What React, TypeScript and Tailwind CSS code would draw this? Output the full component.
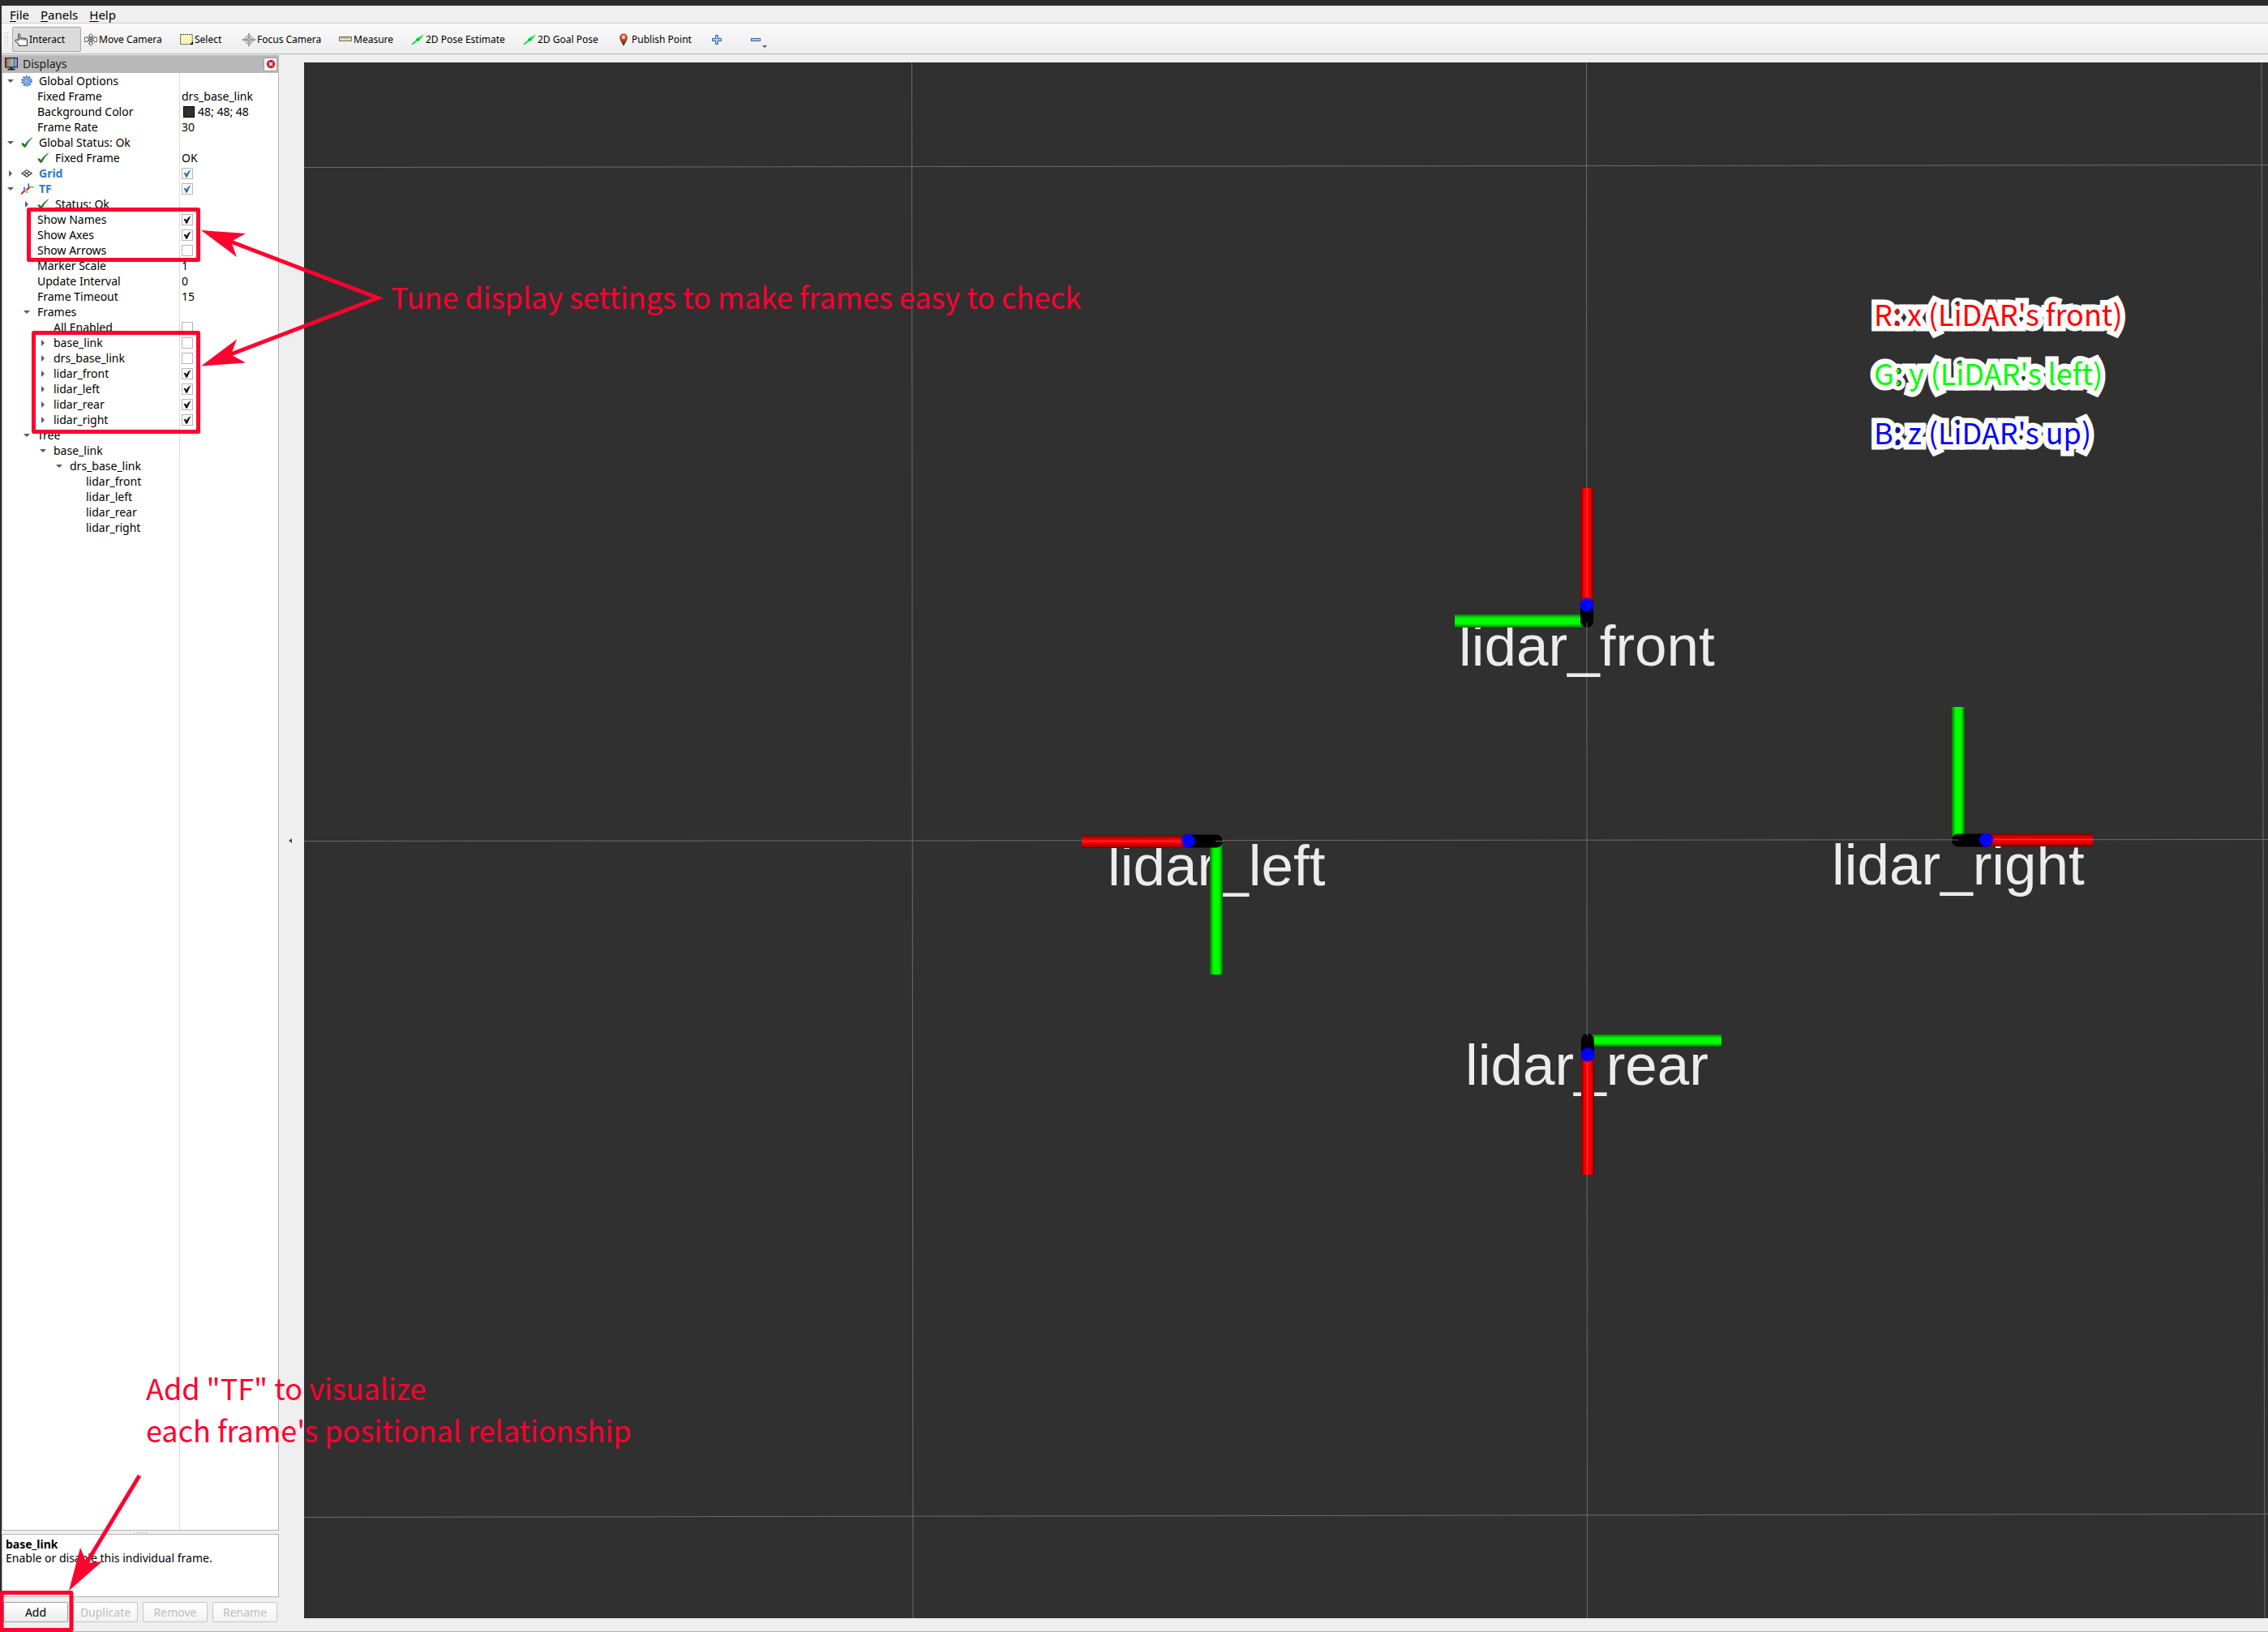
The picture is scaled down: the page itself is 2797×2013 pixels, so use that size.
import React, { useState } from "react";

type Check = "on" | "off";
type Row = {
  name: string;
  level: number;
  arrow?: "down" | "right";
  icon?: "gear" | "ok" | "grid" | "tf";
  value?: string;
  swatch?: boolean;
  check?: Check;
  display?: boolean;
};

const rows: Row[] = [
  { name: "Global Options", level: 0, arrow: "down", icon: "gear" },
  { name: "Fixed Frame", level: 1, value: "drs_base_link" },
  { name: "Background Color", level: 1, value: "48; 48; 48", swatch: true },
  { name: "Frame Rate", level: 1, value: "30" },
  { name: "Global Status: Ok", level: 0, arrow: "down", icon: "ok" },
  { name: "Fixed Frame", level: 1, icon: "ok", value: "OK" },
  { name: "Grid", level: 0, arrow: "right", icon: "grid", check: "on", display: true },
  { name: "TF", level: 0, arrow: "down", icon: "tf", check: "on", display: true },
  { name: "Status: Ok", level: 1, arrow: "right", icon: "ok" },
  { name: "Show Names", level: 1, check: "on" },
  { name: "Show Axes", level: 1, check: "on" },
  { name: "Show Arrows", level: 1, check: "off" },
  { name: "Marker Scale", level: 1, value: "1" },
  { name: "Update Interval", level: 1, value: "0" },
  { name: "Frame Timeout", level: 1, value: "15" },
  { name: "Frames", level: 1, arrow: "down" },
  { name: "All Enabled", level: 2, check: "off" },
  { name: "base_link", level: 2, arrow: "right", check: "off" },
  { name: "drs_base_link", level: 2, arrow: "right", check: "off" },
  { name: "lidar_front", level: 2, arrow: "right", check: "on" },
  { name: "lidar_left", level: 2, arrow: "right", check: "on" },
  { name: "lidar_rear", level: 2, arrow: "right", check: "on" },
  { name: "lidar_right", level: 2, arrow: "right", check: "on" },
  { name: "Tree", level: 1, arrow: "down" },
  { name: "base_link", level: 2, arrow: "down" },
  { name: "drs_base_link", level: 3, arrow: "down" },
  { name: "lidar_front", level: 4 },
  { name: "lidar_left", level: 4 },
  { name: "lidar_rear", level: 4 },
  { name: "lidar_right", level: 4 },
];

const indent = ["pl-0", "pl-5", "pl-10", "pl-15", "pl-20"];

function GearIcon() {
  return (
    <svg viewBox="0 0 14 14" className="size-3.5">
      <circle cx="7" cy="7" r="5.8" fill="none" stroke="#3f71b5" strokeWidth="2" strokeDasharray="2.2 1.44" />
      <circle cx="7" cy="7" r="4.8" fill="#86aee0" stroke="#4b7cc0" strokeWidth=".7" />
      <circle cx="7" cy="7" r="2.6" fill="#a9c8ef" stroke="#3f71b5" strokeWidth=".9" strokeDasharray="1.2 .6" />
      <circle cx="7" cy="7" r="1" fill="#fff" stroke="#3465a4" strokeWidth=".6" />
    </svg>
  );
}

function OkIcon() {
  return (
    <svg viewBox="0 0 14 14" className="size-3.5">
      <path d="M.6 8.4 2.2 7.2 4.6 9.6 Q7.5 4.6 13.4.8 L13.6 1.1 Q8.6 5.8 5.4 12.6 L4 12.8 Z" fill="#1e7b1e" stroke="#125c12" strokeWidth=".4" />
    </svg>
  );
}

function GridIcon() {
  return (
    <svg viewBox="0 0 14 14" className="size-3.5" fill="none" stroke="#333" strokeWidth="1.1">
      <path d="M7 2.6 13.2 6.8 7 11 .8 6.8Z M3.9 4.7 10.1 8.9 M10.1 4.7 3.9 8.9" />
    </svg>
  );
}

function TfIcon() {
  return (
    <svg viewBox="0 0 16 14" className="h-3.5 w-4 shrink-0" fill="none" strokeWidth="1.3">
      <path d="M0 13.4 4 9.6" stroke="#f00" strokeWidth="1.8" />
      <path d="M4 10V4.5" stroke="#22f" />
      <path d="M4 10l4.6 1.4" stroke="#0d0" />
      <path d="M4.5 9.6 9 5.6" stroke="#f0a030" />
      <path d="M6.8 8.6 10.4 5" stroke="#f00" strokeWidth="1.8" />
      <path d="M10 5 8.8.3" stroke="#22f" />
      <path d="M10 4.9h6" stroke="#0d0" />
    </svg>
  );
}

function RowIcon({ kind }: { kind: NonNullable<Row["icon"]> }) {
  return (
    <span className="mr-2 flex w-3.5 shrink-0 items-center">
      {kind === "gear" && <GearIcon />}
      {kind === "ok" && <OkIcon />}
      {kind === "grid" && <GridIcon />}
      {kind === "tf" && <TfIcon />}
    </span>
  );
}

function CheckBox({ label, initial, blue }: { label: string; initial: Check; blue?: boolean }) {
  const [on, setOn] = useState(initial === "on");
  return (
    <span className="relative flex size-3.5">
      <input
        type="checkbox"
        aria-label={label}
        checked={on}
        onChange={(e) => setOn(e.target.checked)}
        className="size-3.5 appearance-none border border-[#b4b4b4] bg-white"
      />
      {on && (
        <svg viewBox="0 0 14 14" className={blue ? "pointer-events-none absolute inset-0 text-[#2367a8]" : "pointer-events-none absolute inset-0 text-black"}>
          <path d="M2.700 6.300 4.700 5.900 6 8.200 Q7.600 4.200 11.200 2.500 Q8.900 6.600 6.800 11.400 H5.300 Q4.400 8.700 2.700 6.300Z" fill="currentColor" stroke="currentColor" strokeWidth=".3" />
        </svg>
      )}
    </span>
  );
}

function TreeArrow({ dir }: { dir?: "down" | "right" }) {
  return (
    <span className="flex w-5 shrink-0 items-center justify-center">
      {dir && (
        <svg viewBox="0 0 8 8" className="size-2" fill="#5c5c5c">
          {dir === "down" ? <path d="M0 2h8L4 6z" /> : <path d="M2 0v8l4-4z" />}
        </svg>
      )}
    </span>
  );
}

function PropertyTree() {
  return (
    <div className="flex flex-1 flex-col border border-t-0 border-[#b4b4b4] bg-white">
      <div role="tree" aria-label="Displays">
        {rows.map((r, i) => (
          <div key={i} role="treeitem" aria-level={r.level + 1} className="flex h-[19px] leading-[19px]">
            <div className="flex w-[219px] shrink-0 items-center border-r border-[#dadada]">
              <div className={`flex items-center ${indent[r.level]}`}>
                <TreeArrow dir={r.arrow} />
                <span className="w-[3px] shrink-0" />
                {r.icon && <RowIcon kind={r.icon} />}
                <span className={r.display ? "font-bold text-[#2d7cc7]" : ""}>{r.name}</span>
              </div>
            </div>
            <div className="flex flex-1 items-center pl-0.5">
              {r.swatch && <span className="mr-1 ml-0.5 size-3.5 border border-black bg-[#303030]" />}
              {r.value}
              {r.check && <CheckBox label={r.name} initial={r.check} blue={r.display} />}
            </div>
          </div>
        ))}
      </div>
      <div className="w-[219px] flex-1 border-r border-[#dadada]" />
    </div>
  );
}

function HandIcon() {
  return (
    <svg viewBox="0 0 16 16" className="size-4" fill="#fff" stroke="#222" strokeWidth="1" strokeLinejoin="round">
      <path d="M4.5 9V1.8Q4.5.6 5.5.6T6.6 1.8V6Q7.5 5 8.6 6.2 9.8 5.3 10.9 6.4 12 5.6 13 6.7 15.2 6.2 15.4 8V15.3H5V13.2L.7 9.6Q.5 8 2 8Z" />
      <path d="M6.6 6v2.4M8.7 6.3v2M10.9 6.5v2M13 6.8v2" />
    </svg>
  );
}

function MoveIcon() {
  return (
    <svg viewBox="0 0 16 16" className="size-4" fill="#fff" stroke="#444" strokeWidth=".9" strokeLinejoin="round">
      <path d="M8 .6 10.8 3.6H9.2V6Q11 5.600 12.600 6V4.600L15.600 5.200V10.400L12.600 10.600 11.800 8.800 9.400 9.600V12.400H10.800L8 15.400 5.200 12.400H6.600V9.600L4.200 8.800 3.400 10.600.4 10.400V5.200L3.400 4.600V6Q5 5.600 6.800 6V3.600H5.200Z" />
      <circle cx="8" cy="7.800" r="2.600" />
      <path d="M5.400 7.800h5.200M8 5.200v5.200" />
    </svg>
  );
}

function SelectIcon() {
  return (
    <svg viewBox="0 0 16 16" className="size-4">
      <rect x=".6" y="1.600" width="14.600" height="12" fill="#fbf5b8" stroke="#222" strokeWidth="1" strokeDasharray="1.600 1" />
      <path d="M16 10v4h-4z" fill="#000" />
    </svg>
  );
}

function FocusIcon() {
  return (
    <svg viewBox="0 0 16 16" className="size-4" fill="none" stroke="#666" strokeWidth="1">
      <circle cx="8" cy="8" r="5" fill="#fff" />
      <circle cx="8" cy="8" r="2.600" />
      <path d="M8 0v16M0 8h16" strokeWidth="1.800" stroke="#777" />
      <path d="M8 1v14M1 8h14" strokeWidth=".7" stroke="#eee" />
    </svg>
  );
}

function RulerIcon() {
  return (
    <svg viewBox="0 0 16 16" className="size-4">
      <rect x=".5" y="4.500" width="15" height="5" fill="#f1e4a8" stroke="#6a6a6a" />
      <path d="M3 5v2M5 5v2M7 5v2M9 5v2M11 5v2M13 5v2" stroke="#777" strokeWidth=".8" />
    </svg>
  );
}

function PoseIcon() {
  return (
    <svg viewBox="0 0 16 16" className="size-4">
      <path d="M.3 13.200 6.600 8 6 6.800 15.800 1.200 9.800 9.800 8.600 9.200 1.600 14.400Z" fill="#0be83a" />
      <path d="M6.400 7.600 9.600 7.400 8.800 9.400z" fill="#0a7a20" />
    </svg>
  );
}

function PinIcon() {
  return (
    <svg viewBox="0 0 16 16" className="size-4">
      <defs>
        <linearGradient id="pin" x1="0" y1="0" x2="0" y2="1">
          <stop offset="0" stopColor="#ea5a38" />
          <stop offset=".45" stopColor="#c2492b" />
          <stop offset="1" stopColor="#3a2a18" />
        </linearGradient>
      </defs>
      <path d="M8 .2A5 5 0 0 1 13 5.200Q13 8 8 15.800 3 8 3 5.200A5 5 0 0 1 8 .2Z" fill="url(#pin)" />
      <circle cx="8" cy="5" r="1.900" fill="#f3f3f3" />
    </svg>
  );
}

const tools = [
  { name: "Move Camera", icon: <MoveIcon />, width: "w-[118px]" },
  { name: "Select", icon: <SelectIcon />, width: "w-[77px]" },
  { name: "Focus Camera", icon: <FocusIcon />, width: "w-[119px]" },
  { name: "Measure", icon: <RulerIcon />, width: "w-[89px]" },
  { name: "2D Pose Estimate", icon: <PoseIcon />, width: "w-[138px]" },
  { name: "2D Goal Pose", icon: <PoseIcon />, width: "w-[116px]" },
  { name: "Publish Point", icon: <PinIcon />, width: "w-[111px]" },
];

function ToolBar() {
  return (
    <div role="toolbar" className="flex h-[38px] items-center border-b border-[#b4b4b4] bg-linear-to-b from-[#fafafa] to-[#ededed] pt-0.5 text-xs">
      <svg viewBox="0 0 5 17" className="ml-1 mr-1 h-[17px] w-[5px]" fill="#b4b4b4">
        {[0, 3, 6, 9, 12, 15].map((y) => (
          <g key={y}>
            <rect x="0" y={y} width="1" height="1" />
            <rect x="3" y={y} width="1" height="1" />
          </g>
        ))}
      </svg>
      <button className="flex h-[31px] w-[85px] shrink-0 items-center gap-0.5 rounded-xs border border-[#a8a8a8] bg-[#dbdbdb] px-0.5">
        <HandIcon />
        Interact
      </button>
      {tools.map((t) => (
        <button key={t.name} className={`flex h-[31px] shrink-0 items-center gap-0.5 px-1 whitespace-nowrap ${t.width}`}>
          <span className="shrink-0">{t.icon}</span>
          {t.name}
        </button>
      ))}
      <button aria-label="Add tool" className="flex h-[31px] w-8 items-center justify-center">
        <svg viewBox="0 0 12 12" className="size-3">
          <path d="M4.500.5h3v4h4v3h-4v4h-3v-4h-4v-3h4z" fill="#a8c8ee" stroke="#3465a4" />
        </svg>
      </button>
      <button aria-label="Remove tool" className="relative ml-4 flex h-[31px] w-8 items-center justify-center">
        <svg viewBox="0 0 12 12" className="size-3">
          <rect x=".5" y="4.500" width="11" height="3" fill="#a8c8ee" stroke="#3465a4" />
        </svg>
        <svg viewBox="0 0 6 4" className="absolute right-0.5 bottom-1 h-1 w-1.5" fill="#555">
          <path d="M0 0h6L3 3z" />
        </svg>
      </button>
    </div>
  );
}

function MenuBar() {
  return (
    <nav className="flex h-[22px] items-center gap-3.5 border-b border-[#cfcfcf] px-2.5 text-[15px] leading-5">
      {["File", "Panels", "Help"].map((m) => (
        <button key={m}>
          <u className="underline-offset-2">{m[0]}</u>
          {m.slice(1)}
        </button>
      ))}
    </nav>
  );
}

function DisplaysPanel() {
  return (
    <aside className="flex w-[342px] shrink-0 flex-col">
      <header className="flex h-[22px] items-center bg-[#b8b8b8] pl-1 pr-0.5 text-[#1c1c1c]">
        <svg viewBox="0 0 16 16" className="size-4">
          <defs>
            <linearGradient id="screen">
              <stop offset="0" stopColor="#b04848" />
              <stop offset=".33" stopColor="#c89090" />
              <stop offset=".34" stopColor="#50b060" />
              <stop offset=".66" stopColor="#b0dcb0" />
              <stop offset=".67" stopColor="#6868d8" />
              <stop offset="1" stopColor="#b8b8f0" />
            </linearGradient>
          </defs>
          <rect x=".6" y=".6" width="14.800" height="11.300" fill="url(#screen)" stroke="#222" strokeWidth="1.200" />
          <path d="M6.500 12h3v1.800h3V15.400h-9v-1.600h3z" fill="#222" />
        </svg>
        <h2 className="ml-1.5 flex-1">Displays</h2>
        <button aria-label="Close panel" className="flex size-[17px] items-center justify-center rounded-xs border border-[#9a9a9a] bg-white">
          <svg viewBox="0 0 12 12" className="size-3">
            <circle cx="6" cy="6" r="5.200" fill="#cf1f2b" />
            <path d="M4 4l4 4M8 4l-4 4" stroke="#fff" strokeWidth="1.500" />
          </svg>
        </button>
      </header>
      <PropertyTree />
      <div className="flex h-1 items-center justify-center gap-0.5">
        {[0, 1, 2, 3, 4, 5].map((d) => (
          <span key={d} className="size-px bg-[#a0a0a0]" />
        ))}
      </div>
      <section className="h-[78px] border border-[#b4b4b4] bg-white px-1 py-[3px] leading-[17px]">
        <h3 className="font-bold">base_link</h3>
        <p>Enable or disable this individual frame.</p>
      </section>
      <div className="flex gap-1.5 px-0.5 pt-1.5 pb-[11px]">
        {["Add", "Duplicate", "Remove", "Rename"].map((b, i) => (
          <button
            key={b}
            disabled={i > 0}
            className="h-[25px] flex-1 rounded-xs border border-[#a0a0a0] bg-linear-to-b from-white to-[#ececec] disabled:border-[#c6c6c6] disabled:to-[#f2f2f2] disabled:text-[#bdbdbd]"
          >
            {b}
          </button>
        ))}
      </div>
    </aside>
  );
}

/* 3D view seen from above; scene coordinates start at the view's top-left corner. */
function SceneView() {
  return (
    <main className="relative mt-2.5 mb-4 flex-1 overflow-hidden bg-[#303030]">
      <svg className="absolute inset-0 size-full" aria-label="3D view">
        <defs>
          <linearGradient id="redV">
            <stop offset="0" stopColor="#700" />
            <stop offset=".3" stopColor="#f00" />
            <stop offset=".7" stopColor="#f00" />
            <stop offset="1" stopColor="#700" />
          </linearGradient>
          <linearGradient id="redH" x1="0" y1="0" x2="0" y2="1">
            <stop offset="0" stopColor="#700" />
            <stop offset=".35" stopColor="#e00" />
            <stop offset=".6" stopColor="#f00" />
            <stop offset="1" stopColor="#700" />
          </linearGradient>
          <linearGradient id="greenV">
            <stop offset="0" stopColor="#007000" />
            <stop offset=".3" stopColor="#0f0" />
            <stop offset=".7" stopColor="#0f0" />
            <stop offset="1" stopColor="#007000" />
          </linearGradient>
          <linearGradient id="greenH" x1="0" y1="0" x2="0" y2="1">
            <stop offset="0" stopColor="#008000" />
            <stop offset=".3" stopColor="#0f0" />
            <stop offset=".7" stopColor="#0f0" />
            <stop offset="1" stopColor="#007000" />
          </linearGradient>
        </defs>
        <g stroke="#6c6c6c" strokeWidth="1">
          <path d="M0 129.500 2422 126.500M0 960.500 2422 958.500M0 1794.500 2422 1790.500" />
          <path d="M749.500 0 751 1919M1581.500 0 1582.500 1919M2414 0 2418 1919" />
        </g>
        <g fill="#ececec" fontFamily="'Liberation Sans', sans-serif" fontSize="71">
          <text x="1424" y="744">lidar_front</text>
          <text x="991" y="1015">lidar_left</text>
          <text x="1884" y="1014">lidar_right</text>
          <text x="1432" y="1261">lidar_rear</text>
        </g>
        {/* lidar_front */}
        <rect x="1574" y="525" width="16" height="145" fill="url(#redV)" />
        <rect x="1419" y="681" width="160" height="16" fill="url(#greenH)" />
        <path d="M1582 670V689" stroke="#000" strokeWidth="16" strokeLinecap="round" />
        <circle cx="1582" cy="669" r="8.500" fill="#00f" />
        {/* lidar_left */}
        <rect x="959" y="953" width="132" height="16" fill="url(#redH)" />
        <rect x="1117" y="962" width="16" height="163" fill="url(#greenV)" />
        <path d="M1091 960.500H1125" stroke="#000" strokeWidth="16" strokeLinecap="round" />
        <circle cx="1090.500" cy="960" r="8.500" fill="#00f" />
        {/* lidar_right */}
        <rect x="2032" y="795" width="16" height="160" fill="url(#greenV)" />
        <rect x="2074" y="951" width="132" height="16" fill="url(#redH)" />
        <path d="M2040 959.500H2074" stroke="#000" strokeWidth="16" strokeLinecap="round" />
        <circle cx="2074.500" cy="959" r="8.500" fill="#00f" />
        {/* lidar_rear */}
        <rect x="1585" y="1199" width="163" height="15" fill="url(#greenH)" />
        <rect x="1575" y="1224" width="16" height="148" fill="url(#redV)" />
        <path d="M1583 1206V1222" stroke="#000" strokeWidth="16" strokeLinecap="round" />
        <circle cx="1583" cy="1224" r="8.500" fill="#00f" />
        <path d="M1582 525V660M1582.500 1233V1372M960 960.500H1081M2084 958.500H2206" stroke="#fff" strokeOpacity=".25" />
        <path d="M1582 691V698M1582.500 1197V1201M1124 960.500H1134M2031 959H2040" stroke="#6c6c6c" />
      </svg>
    </main>
  );
}

function Annotations() {
  return (
    <div className="pointer-events-none absolute inset-0 font-['Noto_Sans_CJK_JP','Noto_Sans',sans-serif] text-[36px] leading-[52px] whitespace-nowrap text-[#ff002f]">
      <svg className="absolute inset-0 size-full" fill="none" stroke="#ff002f" strokeWidth="5" strokeLinejoin="round">
        <rect x="35.500" y="258.500" width="209" height="62" />
        <rect x="41.500" y="410.500" width="203" height="122" />
        <rect x="2" y="1964.500" width="86" height="46" />
        <path d="M282 297 466 367.500 282 438M106 1929 172 1820" strokeLinejoin="miter" />
        <g fill="#ff002f" stroke="none">
          <path d="M248 284 303 288 285 298 292 317Z" />
          <path d="M248 451.500 303 447.500 285 437.500 292 418.500Z" />
          <path d="M85 1962 99 1909 107 1928 126 1926Z" />
        </g>
      </svg>
      <p className="absolute top-[339px] left-[482px]">Tune display settings to make frames easy to check</p>
      <p className="absolute top-[1685px] left-[180px]">
        Add "TF" to visualize
        <br />
        each frame's positional relationship
      </p>
      <div className="absolute top-[350px] left-[2311px] leading-[73px] [-webkit-text-stroke:13px_white] [paint-order:stroke]">
        <p className="text-[#ff0000]">R: x (LiDAR's front)</p>
        <p className="text-[#00ff00]">G: y (LiDAR's left)</p>
        <p className="text-[#0000ff]">B: z (LiDAR's up)</p>
      </div>
    </div>
  );
}

export default function App() {
  return (
    <div className="relative flex min-h-screen flex-col border-t-7 border-l-2 border-[#2c2c2c] bg-[#efefef] font-['Noto_Sans',sans-serif] text-sm text-black">
      <MenuBar />
      <ToolBar />
      <div className="flex flex-1 border-b border-[#b4b4b4]">
        <div className="flex pt-px">
          <DisplaysPanel />
        </div>
        <button aria-label="Collapse left panels" className="mt-2.5 mb-4 flex w-[31px] shrink-0 items-center justify-center pr-1">
          <svg viewBox="0 0 4 6" className="h-1.5 w-1" fill="#444">
            <path d="M4 0v6L0 3z" />
          </svg>
        </button>
        <SceneView />
      </div>
      <div className="absolute -top-[7px] -left-0.5 right-0 bottom-0">
        <Annotations />
      </div>
    </div>
  );
}
